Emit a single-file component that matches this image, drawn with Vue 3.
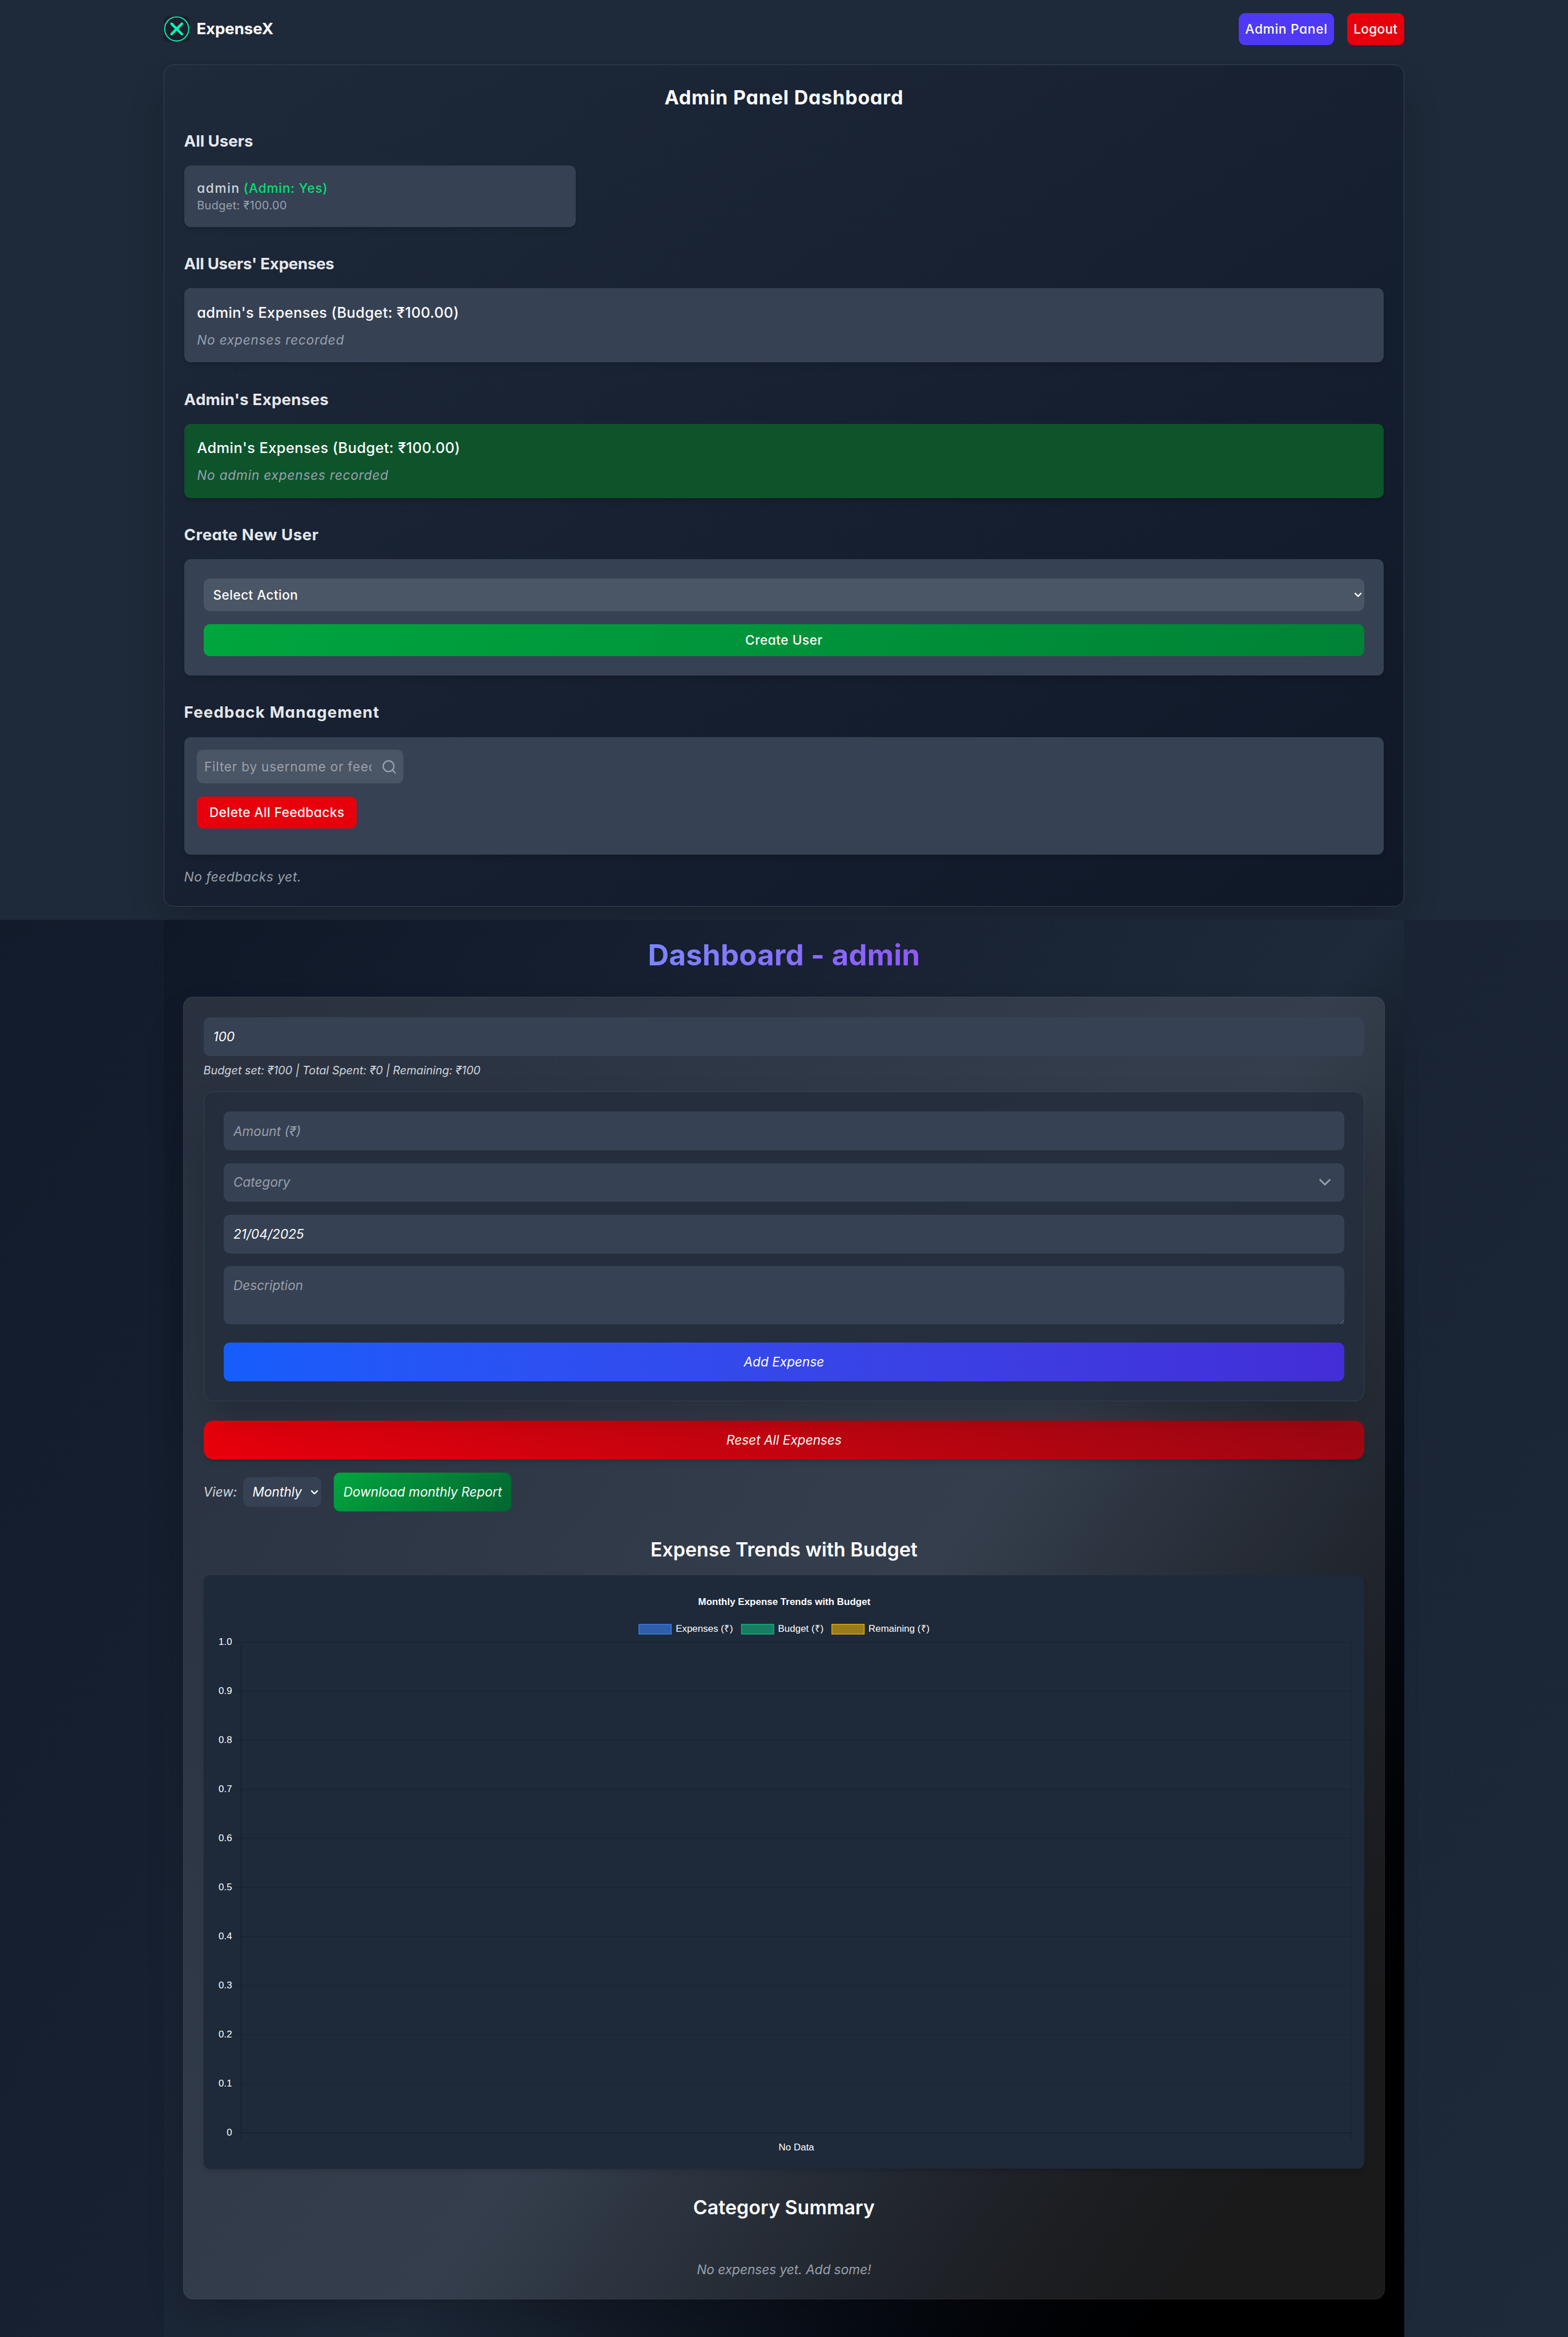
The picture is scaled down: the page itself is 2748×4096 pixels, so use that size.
<script setup>
const ticks = ['1.0', '0.9', '0.8', '0.7', '0.6', '0.5', '0.4', '0.3', '0.2', '0.1', '0']
</script>

<template>
  <div class="page">
    <header class="nav">
      <div class="wrap nav-row">
        <div class="brand">
          <svg class="logo" viewBox="0 0 32 32">
            <rect width="32" height="32" rx="5" fill="#1e1e2e" />
            <circle cx="16" cy="16" r="14.9" fill="none" stroke="#00ffb3" stroke-width="1.3" />
            <path d="M9.6 9.6l12.8 12.8M22.4 9.6L9.6 22.4" stroke="#00ffb3" stroke-width="3.1" stroke-linecap="round" />
          </svg>
          <span class="brand-name">ExpenseX</span>
        </div>
        <div class="nav-actions">
          <button class="btn indigo">Admin Panel</button>
          <button class="btn red logout">Logout</button>
        </div>
      </div>
    </header>

    <section class="admin">
      <div class="wrap admin-card">
        <h2 class="admin-title">Admin Panel Dashboard</h2>

        <h3 class="sub t-users">All Users</h3>
        <div class="box user-box">
          <p class="user"><span class="user-name">admin</span> <span class="yes">(Admin: Yes)</span></p>
          <p class="user-budget">Budget: ₹100.00</p>
        </div>

        <h3 class="sub">All Users' Expenses</h3>
        <div class="box">
          <h4 class="box-title">admin's Expenses (Budget: ₹100.00)</h4>
          <p class="empty">No expenses recorded</p>
        </div>

        <h3 class="sub t-admin">Admin's Expenses</h3>
        <div class="box green-box">
          <h4 class="box-title">Admin's Expenses (Budget: ₹100.00)</h4>
          <p class="empty">No admin expenses recorded</p>
        </div>

        <h3 class="sub t-create">Create New User</h3>
        <div class="box create-box">
          <div class="select-action">
            <span>Select Action</span>
            <svg class="caret" viewBox="0 0 10 6"><path d="M1 1l4 4 4-4" /></svg>
          </div>
          <button class="btn create">Create User</button>
        </div>

        <h3 class="sub t-feedback">Feedback Management</h3>
        <div class="box feedback-box">
          <div class="filter">
            <input class="filter-input" placeholder="Filter by username or feedback" />
            <svg class="search" viewBox="0 0 24 24"><circle cx="11" cy="11" r="8" /><path d="M21 21l-4.3-4.3" /></svg>
          </div>
          <button class="btn red delete">Delete All Feedbacks</button>
        </div>
        <p class="empty none">No feedbacks yet.</p>
      </div>
    </section>

    <main class="wrap dash">
      <h1 class="dash-title"><span>Dashboard - admin</span></h1>
      <div class="panel">
        <input class="field" value="100" />
        <p class="budget-line">Budget set: ₹100 | Total Spent: ₹0 | Remaining: ₹100</p>

        <div class="form">
          <input class="field" placeholder="Amount (₹)" />
          <div class="field category">
            <span>Category</span>
            <svg viewBox="0 0 24 24"><path d="M6 9l6 6 6-6" /></svg>
          </div>
          <input class="field" value="21/04/2025" />
          <textarea class="field area" placeholder="Description"></textarea>
          <button class="wide add">Add Expense</button>
        </div>

        <button class="wide reset">Reset All Expenses</button>

        <div class="view-row">
          <span class="view-label">View:</span>
          <div class="view-select"><span>Monthly</span><svg class="caret" viewBox="0 0 10 6"><path d="M1 1l4 4 4-4" /></svg></div>
          <button class="download">Download monthly Report</button>
        </div>

        <h2 class="section-title trends">Expense Trends with Budget</h2>
        <div class="chart-card">
          <svg class="chart" viewBox="0 0 1406 703">
            <text class="chart-title" x="703.5" y="20.7">Monthly Expense Trends with Budget</text>
            <g class="legend">
              <rect x="523.5" y="44.5" width="40" height="12" fill="#3b82f6" fill-opacity=".6" stroke="#3b82f6" />
              <text x="569" y="53.8">Expenses (₹)</text>
              <rect x="650.5" y="44.5" width="40" height="12" fill="#10b981" fill-opacity=".6" stroke="#10b981" />
              <text x="695.8" y="53.8">Budget (₹)</text>
              <rect x="762.5" y="44.5" width="40" height="12" fill="#eab308" fill-opacity=".6" stroke="#eab308" />
              <text x="807.8" y="53.8">Remaining (₹)</text>
            </g>
            <g v-for="(t, i) in ticks" :key="t">
              <path class="grid" :d="`M22.5 ${66.6 + i * 60.77}H1406`" />
              <text class="tick" x="19.5" :y="70.2 + i * 60.77">{{ t }}</text>
            </g>
            <path class="grid" d="M30.7 66.6V683M1405.5 66.6V683" />
            <path class="grid" d="M30.7 66.6V674.3H1406" />
            <text class="nodata" x="718.5" y="696.2">No Data</text>
          </svg>
        </div>

        <h2 class="section-title summary">Category Summary</h2>
        <p class="no-exp">No expenses yet. Add some!</p>
      </div>
    </main>
  </div>
</template>

<style>
body {
  margin: 0;
  background: #101828;
}
</style>

<style scoped>
* { box-sizing: border-box; margin: 0; }
.page {
  zoom: 1.415;
  width: 1942px;
  height: 2894.6px;
  overflow: hidden;
  font-family: Inter, "Liberation Sans", sans-serif;
  font-size: 16px;
  line-height: 24px;
  color: #fff;
  background: linear-gradient(to bottom right in oklab, #101828, #1e2939);
}
button, input, textarea { font: inherit; color: inherit; border: 0; outline: 0; display: block; }
button { padding: 0; white-space: nowrap; }
.wrap { width: 1536px; margin: 0 auto; }

/* Header */
.nav { position: relative; z-index: 1; height: 72px; background: #1e2939; }
.nav, .admin { font-feature-settings: "cv11"; }
.nav-row { height: 72px; display: flex; align-items: center; justify-content: space-between; }
.brand { display: flex; align-items: center; gap: 8.4px; }
.logo { width: 32px; height: 32px; }
.brand-name { font-size: 19.6px; font-weight: 700; line-height: 28px; letter-spacing: -.1px; }
.nav-actions { display: flex; gap: 16px; }
.btn { height: 40px; border-radius: 8px; font-weight: 500; }
.indigo { width: 118.3px; background: #4f39f6; letter-spacing: .52px; }
.red { background: #e7000b; }
.logout { width: 70.6px; letter-spacing: .2px; }

/* Admin panel */
.admin { height: 1067px; padding-top: 8px; background: #1e2939; overflow: hidden; }
.admin-card {
  height: 1043px;
  padding: 24.3px;
  border: 1px solid #354355;
  border-radius: 12px;
  background: linear-gradient(to bottom right in oklab, #1e2939, #101828);
  box-shadow: 0 25px 50px -12px rgba(0, 0, 0, .25);
}
.admin-title { font-size: 24px; line-height: 31px; font-weight: 700; text-align: center; margin-bottom: 25px; letter-spacing: .6px; }
.sub { font-size: 19.6px; line-height: 28px; font-weight: 700; color: #e5e7eb; margin: 0 0 16px; letter-spacing: -.22px; }
.t-users { letter-spacing: -.05px; }
.t-admin { letter-spacing: .15px; }
.t-create { letter-spacing: .32px; }
.t-feedback { letter-spacing: .8px; }
.box { background: #364153; border-radius: 8px; padding: 16px; margin-bottom: 32px; box-shadow: 0 4px 6px -1px rgba(0, 0, 0, .1), 0 2px 4px -2px rgba(0, 0, 0, .1); }
.user-box { width: 484.8px; height: 76px; }
.user { color: #d1d5dc; font-weight: 500; }
.user-name { letter-spacing: 1.15px; }
.yes { color: #05df72; letter-spacing: .58px; }
.user-budget { font-size: 14px; line-height: 19px; color: #99a1af; letter-spacing: .28px; }
.box-title { font-size: 18px; line-height: 28px; font-weight: 500; color: #fff; letter-spacing: .27px; }
.green-box { background: #0d542b; }
.empty { margin-top: 8px; font-style: italic; color: #99a1af; letter-spacing: .57px; }
.create-box { padding: 24px; }
.select-action { height: 40px; padding: 0 3px 0 12px; border-radius: 8px; background: #4a5565; display: flex; align-items: center; justify-content: space-between; font-weight: 500; letter-spacing: .3px; }
.caret { width: 10px; height: 6px; fill: none; stroke: #fff; stroke-width: 1.7; flex: none; }
.create { width: 100%; margin-top: 16px; background: linear-gradient(135deg in oklab, #00a63e, #008236); letter-spacing: .38px; }
.feedback-box { height: 145.6px; margin-bottom: 16px; }
.filter { width: 256px; height: 41.6px; border-radius: 8px; background: #4a5565; display: flex; align-items: center; padding: 0 8px 0 9px; gap: 12px; }
.filter-input { flex: 1; min-width: 0; padding: 0; background: none; letter-spacing: .54px; }
.filter-input::placeholder { color: #99a1af; opacity: 1; }
.search { width: 20px; height: 20px; flex: none; fill: none; stroke: #99a1af; stroke-width: 2; stroke-linecap: round; }
.delete { width: 198px; margin-top: 16px; letter-spacing: .31px; }
.none { margin: 0; letter-spacing: .42px; }

/* Dashboard */
.dash { height: 1756px; padding: 24px; background: linear-gradient(125deg in oklab, #101828, #1e2939 54.8%, #000); }
.dash-title { font-size: 36px; line-height: 40px; font-weight: 700; text-align: center; margin-bottom: 32px; letter-spacing: .16px; }
.dash-title span { display: inline-block; background: linear-gradient(to right in oklab, #7c86ff, #8e58ff); -webkit-background-clip: text; background-clip: text; color: transparent; }
.panel { height: 1613px; padding: 24.3px; border: 1px solid rgba(255, 255, 255, .06); border-radius: 12px; background: rgba(255, 255, 255, .1); font-style: italic; box-shadow: 0 25px 50px -12px rgba(0, 0, 0, .25); }
.field { width: 100%; height: 48px; padding: 0 12px; border-radius: 8px; background: #364153; }
.field::placeholder { color: #9a9fa8; opacity: 1; }
.budget-line { margin-top: 8px; font-size: 14px; line-height: 20px; color: #d1d5dc; }
.form { position: relative; z-index: 1; display: flex; flex-direction: column; gap: 16px; height: 384px; margin-top: 16px; padding: 24.3px; border: 1px solid #364153; border-radius: 12px; background: rgba(35, 46, 60, .9); box-shadow: 0 25px 50px -12px rgba(0, 0, 0, .25); }
.category { display: flex; align-items: center; justify-content: space-between; color: #9a9fa8; }
.category svg { width: 24px; height: 24px; fill: none; stroke: #99a1af; stroke-width: 2; stroke-linecap: round; stroke-linejoin: round; }
.area { height: 72px; padding: 12px; flex: none; resize: vertical; }
.wide { width: 100%; height: 48px; flex: none; border-radius: 8px; }
.add { margin-top: 6.7px; background: linear-gradient(to right in oklab, #155dfc, #432dd7); }
.reset { margin-top: 24px; border-radius: 12px; background: linear-gradient(to right in oklab, #e7000b, #9f0712); box-shadow: 0 4px 6px -1px rgba(0, 0, 0, .1), 0 2px 4px -2px rgba(0, 0, 0, .1); }
.view-row { display: flex; align-items: center; margin-top: 16px; height: 48px; }
.view-label { color: #d1d5dc; width: 48.8px; }
.view-select { width: 97px; height: 37px; padding: 0 3px 0 12px; border-radius: 8px; background: #364153; display: flex; align-items: center; justify-content: space-between; }
.download { width: 219.4px; height: 48px; margin-left: 16px; border-radius: 8px; background: linear-gradient(135deg in oklab, #00a63e, #016630); }
.section-title { font-size: 24px; line-height: 32px; font-weight: 600; font-style: normal; text-align: center; }
.trends { margin: 31.4px 0 16px; }
.chart-card { height: 735px; padding: 16px; border-radius: 8px; background: #1e2939; box-shadow: 0 4px 6px -1px rgba(0, 0, 0, .1), 0 2px 4px -2px rgba(0, 0, 0, .1); }
.chart { display: block; width: 1406px; height: 703px; overflow: visible; font: 12px "Liberation Sans", Arial, sans-serif; fill: #fff; }
.chart-title { font-weight: 700; text-anchor: middle; }
.tick { text-anchor: end; }
.nodata { text-anchor: middle; }
.grid { fill: none; stroke: rgba(0, 0, 0, .1); stroke-width: 1; }
.summary { margin: 31.8px 0 49px; }
.no-exp { text-align: center; color: #99a1af; }
</style>
